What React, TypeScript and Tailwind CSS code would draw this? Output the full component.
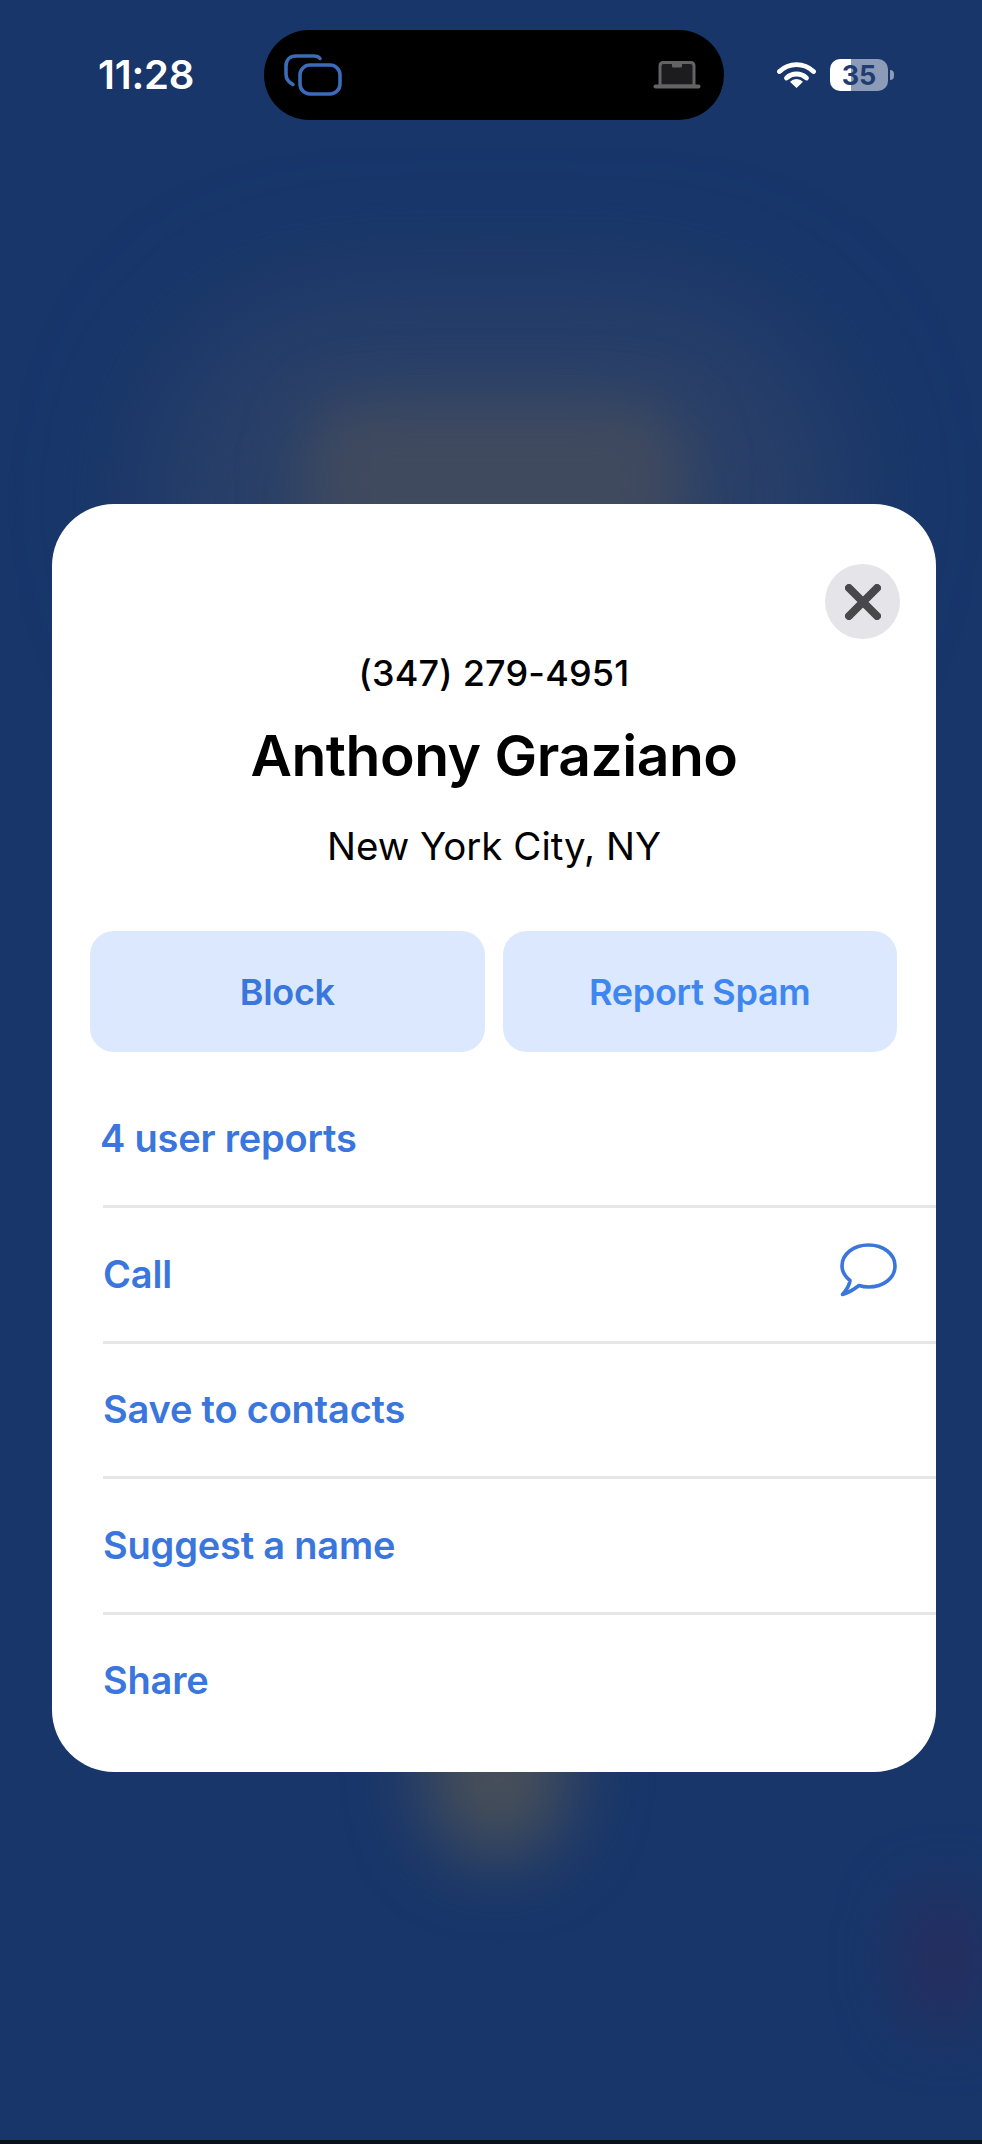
const rows = ["Call", "Save to contacts", "Suggest a name", "Share"];

function TasksIcon() {
    return (
        <svg width="58" height="42" viewBox="0 0 58 42" fill="none" stroke="#3a6cb8" strokeWidth="3.6" strokeLinecap="round">
            <path d="M36 4.5C34.5 2.6 33 2 30 2H12C6 2 2 6 2 12V20C2 25 4 28 9 30.5" />
            <rect x="16" y="11" width="40" height="29" rx="10" />
        </svg>
    );
}

function LaptopIcon() {
    return (
        <svg width="48" height="28" viewBox="0 0 48 28" fill="none">
            <path d="M7 25V5C7 2.8 8.5 1.5 10.5 1.5H37.5C39.5 1.5 41 2.8 41 5V25Z" fill="#1c1c1e" stroke="#636366" strokeWidth="3" />
            <path d="M19 3H29V5C29 6 28.5 6.5 27.5 6.5H20.5C19.5 6.5 19 6 19 5Z" fill="#636366" />
            <rect x="0.5" y="23.5" width="47" height="4" rx="2" fill="#636366" />
        </svg>
    );
}

function WifiIcon() {
    return (
        <svg width="39" height="26" viewBox="0 0 39 26" fill="none" stroke="#ffffff" strokeWidth="4.8" strokeLinecap="round">
            <path d="M2.5 9.5A24.5 24.5 0 0 1 36.5 9.5" />
            <path d="M9.5 16A14.5 14.5 0 0 1 29.5 16" />
            <path d="M19.5 26L13 19.8A9 9 0 0 1 26 19.8Z" fill="#ffffff" stroke="none" />
        </svg>
    );
}

function ChatIcon() {
    return (
        <svg width="57" height="54" viewBox="0 0 57 54" fill="none" stroke="#3a76dc" strokeWidth="3.6" strokeLinejoin="round" className="mb-[8px]">
            <path d="M10 37.5C4.5 33 2 28 2 23C2 11 13.5 2 28.5 2C43.5 2 55 11 55 23C55 35 43.5 44 28.5 44C25 44 22 43.5 19 42.5C14.5 46 9 49.5 2.5 51.5C6.5 47 9.5 42 10 37.5Z" />
        </svg>
    );
}

function StatusBar() {
    return (
        <div className="flex h-[120px] items-end">
            <div className="flex h-[90px] w-[264px] items-center pl-[98px] text-[40px] leading-none font-semibold tracking-[-0.2px] text-white">
                11:28
            </div>
            <div className="flex h-[90px] w-[460px] items-center justify-between rounded-[45px] bg-black pr-[23px] pl-[20px]">
                <TasksIcon />
                <LaptopIcon />
            </div>
            <div className="flex h-[90px] items-center pl-[53px]">
                <WifiIcon />
                <div className="ml-[14px] flex h-[32px] w-[58px] items-center justify-center rounded-[10px] bg-[linear-gradient(90deg,#ffffff_36%,#8c9cb8_36%)] text-[27px] leading-none font-bold text-[#1f3d72]">
                    35
                </div>
                <div className="ml-[2px] h-[10px] w-[4px] rounded-r-full bg-[#8c9cb8]" />
            </div>
        </div>
    );
}

export default function App() {
    return (
        <div className="relative flex h-[2144px] w-[982px] flex-col overflow-hidden bg-[#18366a] font-['Inter','Noto_Sans',sans-serif]">
            {/* Blurred wallpaper behind the sheet */}
            <div className="absolute top-[290px] left-[150px] h-[420px] w-[690px] rounded-[200px] bg-[#2a4068] blur-[60px]" />
            <div className="absolute top-[400px] left-[305px] h-[160px] w-[380px] rounded-[60px] bg-[#404a5e] blur-[30px]" />
            <div className="absolute top-[1680px] left-[425px] h-[180px] w-[145px] rounded-full bg-[#484f58] blur-[36px]" />
            <div className="absolute top-[1890px] left-[900px] h-[140px] w-[90px] rounded-full bg-[#262e5e] blur-[30px]" />

            <div className="relative flex flex-1 flex-col">
                <StatusBar />

                <div className="mt-[384px] mr-[46px] ml-[52px] h-[1268px] rounded-[62px] bg-white">
                    <div className="flex justify-end pt-[60px] pr-[36px]">
                        <button className="flex h-[75px] w-[75px] items-center justify-center rounded-full bg-[#e5e4e8]">
                            <svg width="36" height="36" viewBox="0 0 36 36" fill="none" stroke="#48484a" strokeWidth="8" strokeLinecap="round">
                                <path d="M4 4L32 32M32 4L4 32" />
                            </svg>
                        </button>
                    </div>

                    <div className="text-center text-black">
                        <div className="mt-[12px] text-[36px] leading-[44px] font-medium tracking-[0.2px]">(347) 279-4951</div>
                        <div className="mt-[26px] text-[57px] leading-[70px] font-semibold tracking-[-0.5px]">Anthony Graziano</div>
                        <div className="mt-[30px] text-[38.5px] leading-[50px]">New York City, NY</div>
                    </div>

                    <div className="mt-[60px] flex gap-[18px] pr-[39px] pl-[38px] text-[36px] font-semibold tracking-[-0.3px]">
                        <button className="h-[121px] flex-1 rounded-[24px] bg-[#dbe8fd] text-[#3a76dc]">Block</button>
                        <button className="h-[121px] flex-1 rounded-[24px] bg-[#dbe8fd] text-[#3f87f0]">Report Spam</button>
                    </div>

                    <div className="mt-[19px] pl-[48px] text-[38px] font-semibold tracking-[-0.2px] text-[#3a76dc]">
                        <div className="flex h-[134px] items-center">4 user reports</div>
                        <div className="pl-[3px]">
                            {rows.map((row) => (
                                <div key={row} className="flex h-[135.5px] items-center justify-between border-t-[3px] border-[#e6e6e8] pr-[39px]">
                                    <span>{row}</span>
                                    {row === "Call" && <ChatIcon />}
                                </div>
                            ))}
                        </div>
                    </div>
                </div>

                <div className="mt-auto h-[4px] bg-[#0a0f1c]" />
            </div>
        </div>
    );
}
